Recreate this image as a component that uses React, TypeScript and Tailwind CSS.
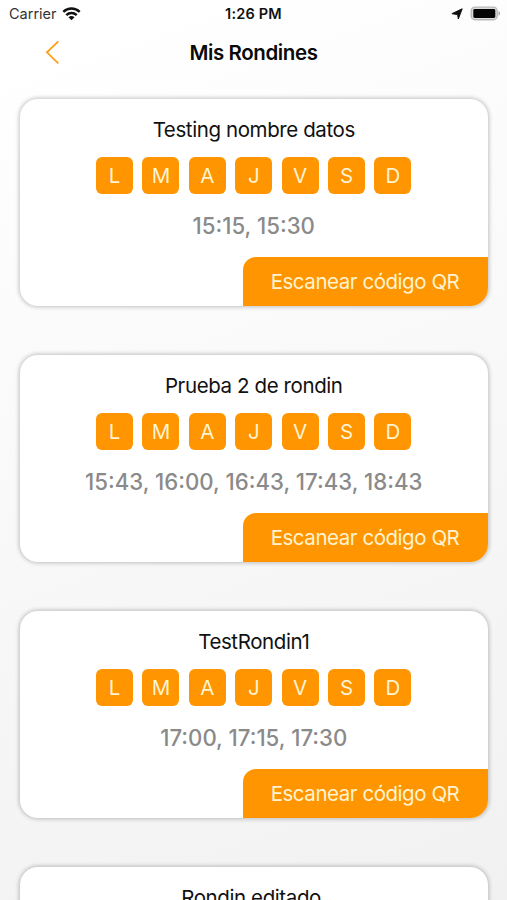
const DAYS = ['L', 'M', 'A', 'J', 'V', 'S', 'D'];

type Round = { name: string; times?: string };

const ROUNDS: Round[] = [
  { name: 'Testing nombre datos', times: '15:15, 15:30' },
  { name: 'Prueba 2 de rondin', times: '15:43, 16:00, 16:43, 17:43, 18:43' },
  { name: 'TestRondin1', times: '17:00, 17:15, 17:30' },
  { name: 'Rondin editado ' },
];

function WifiIcon() {
  return (
    <svg className="mb-px ml-[5px] h-[14px] w-[19px]" viewBox="0 0 19 14" fill="none" stroke="#111" strokeWidth="2.5">
      <path d="M1.300 4.800C6 .3 13 .3 17.700 4.800" />
      <path d="M4.300 8.100C7.200 5.300 11.800 5.300 14.700 8.100" />
      <path d="M9.500 13.300 6.500 10.300C8.200 8.700 10.800 8.700 12.500 10.300Z" fill="#111" stroke="none" />
    </svg>
  );
}

function StatusBar() {
  return (
    <div className="grid h-7 shrink-0 grid-cols-3 items-center text-[14.5px] leading-7 text-[#111]">
      <div className="flex items-center pl-[9px]">
        <span className="text-[#333]">Carrier</span>
        <WifiIcon />
      </div>
      <div className="text-center text-[14.5px] font-semibold tracking-[0.2px]">1:26 PM</div>
      <div className="flex items-center justify-end pr-[6px]">
        <svg className="mr-[7px] h-3 w-3" viewBox="0 0 12 12" fill="#111" stroke="#111" strokeWidth="1" strokeLinejoin="round">
          <path d="M11.200.8 7.300 11 6.600 6.600 .9 5.700Z" />
        </svg>
        <svg className="mb-px h-[15px] w-[31px]" viewBox="0 0 31 15">
          <rect x="1.200" y="1.100" width="26" height="12.600" rx="3.800" fill="#dcdcdc" stroke="#b9b9b9" strokeWidth="1.400" />
          <rect x="3.300" y="3.100" width="22" height="8.800" rx="1.400" fill="#050505" />
          <path d="M28.500 5.100c2.200 1 2.200 3.800 0 4.700Z" fill="#aaa" />
        </svg>
      </div>
    </div>
  );
}

function Header() {
  return (
    <header className="grid h-[49px] shrink-0 grid-cols-[1fr_auto_1fr] items-center">
      <svg className="mb-px ml-[45px] h-6 w-4" viewBox="0 0 16 24" fill="none" stroke="#ff9c10" strokeWidth="1.7">
        <path d="M13.300 1.400 1.900 12.300 13.300 23.300" />
      </svg>
      <h1 className="pt-[2px] text-[20.500px] font-semibold tracking-[-0.4px] text-[#0a0a0a]">Mis Rondines</h1>
      <span />
    </header>
  );
}

function RoundCard({ name, times }: Round) {
  return (
    <article className="flex h-[207.500px] shrink-0 flex-col items-center overflow-hidden rounded-[18px] bg-white shadow-[0_0_4px_1px_rgba(0,0,0,0.24)]">
      <h2 className="mt-[17px] h-7 whitespace-pre text-[20.500px] leading-7 tracking-[-0.4px] text-[#111]">{name}</h2>
      {times && (
        <>
          <div className="mt-[13px] flex gap-[9.400px]">
            {DAYS.map((day) => (
              <span
                key={day}
                className="flex h-[37px] w-[37px] items-center justify-center rounded-[6px] bg-[#ff9500] pt-[2px] text-[20.500px] text-[#fff3d0]"
              >
                {day}
              </span>
            ))}
          </div>
          <p className="mt-[18px] h-7 text-[22.200px] font-medium leading-7 text-[#8a8a8a]">{times}</p>
          <button className="mt-auto h-[49px] w-[245px] self-end rounded-tl-[13px] bg-[#ff9500] pt-px text-[20.500px] tracking-[-0.45px] text-[#fff3d0]">
            Escanear código QR
          </button>
        </>
      )}
    </article>
  );
}

export default function App() {
  return (
    <div className="flex h-[900px] w-[507px] flex-col overflow-hidden bg-linear-160 from-white from-5% to-[#f1f1f1] font-[Inter,sans-serif]">
      <StatusBar />
      <Header />
      <main className="flex flex-col gap-[48.700px] pt-[21.500px] pr-[19.500px] pl-[20px]">
        {ROUNDS.map((round) => (
          <RoundCard key={round.name} {...round} />
        ))}
      </main>
    </div>
  );
}
